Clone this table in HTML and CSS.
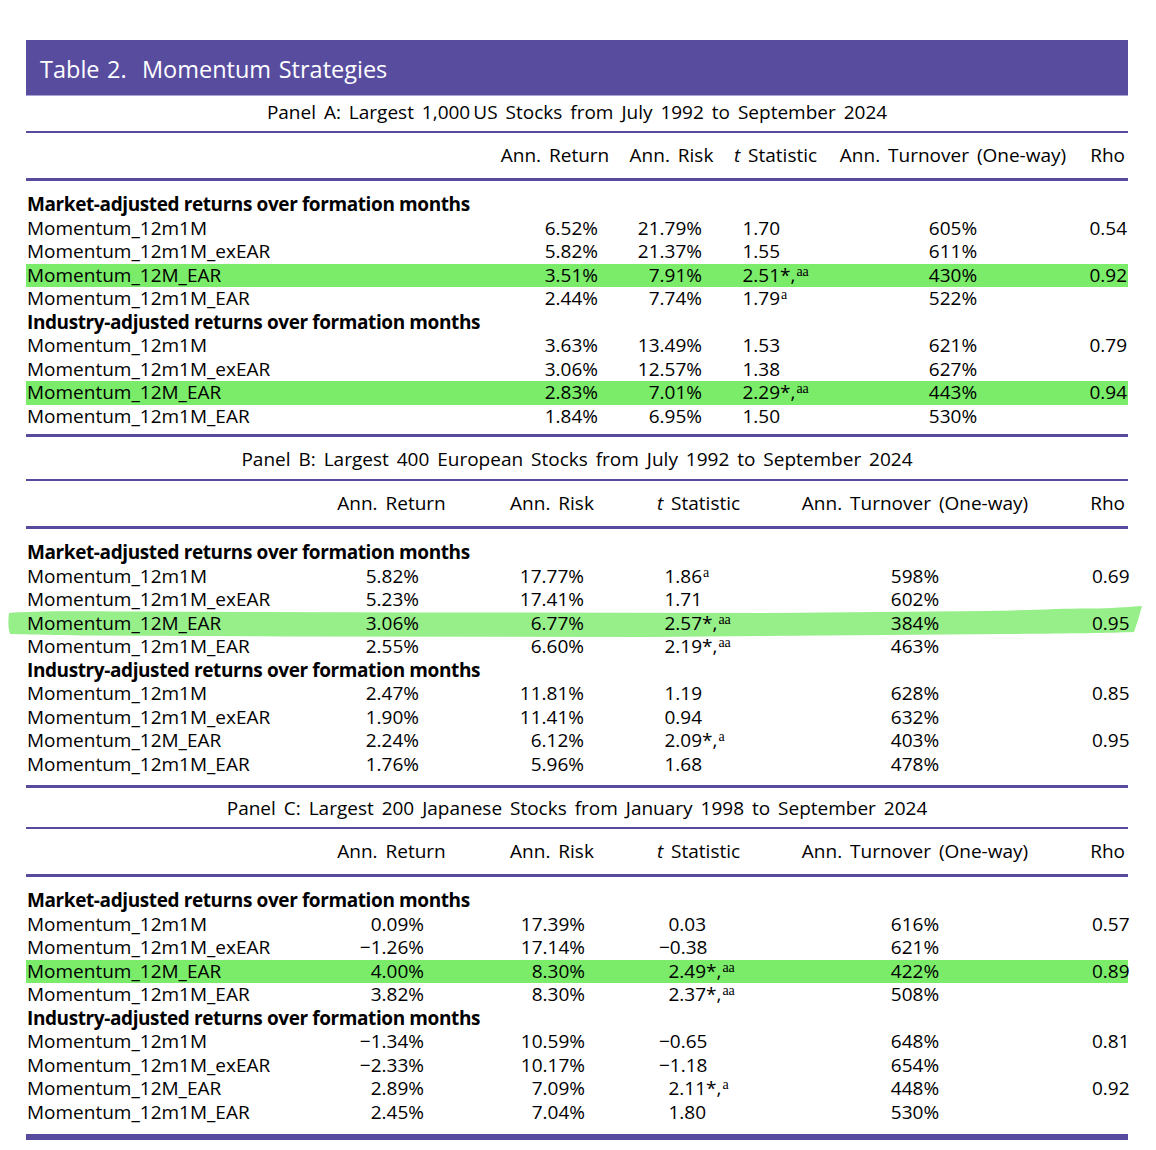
FILE: index.html
```html
<!DOCTYPE html>
<html lang="en">
<head>
<meta charset="utf-8">
<title>Table 2. Momentum Strategies</title>
<link rel="stylesheet" href="styles.css">
</head>
<body>
<div class="table">
  <div class="caption">Table 2.&nbsp; Momentum Strategies</div>

  <section class="panel panel-a">
    <div class="panel-title">Panel A: Largest 1,000&#8201;US Stocks from July 1992 to September 2024</div>
    <div class="row head">
      <span class="c-label"></span>
      <span class="c-ret">Ann. Return</span>
      <span class="c-risk">Ann. Risk</span>
      <span class="c-t"><i>t</i>&nbsp;Statistic</span>
      <span class="c-turn">Ann. Turnover (One-way)</span>
      <span class="c-rho">Rho</span>
    </div>
    <div class="body">
      <div class="row group">Market-adjusted returns over formation months</div>
      <div class="row"><span class="c-label">Momentum_12m1M</span><span class="c-ret">6.52%</span><span class="c-risk">21.79%</span><span class="c-t"><span class="num">1.70</span></span><span class="c-turn">605%</span><span class="c-rho">0.54</span></div>
      <div class="row"><span class="c-label">Momentum_12m1M_exEAR</span><span class="c-ret">5.82%</span><span class="c-risk">21.37%</span><span class="c-t"><span class="num">1.55</span></span><span class="c-turn">611%</span><span class="c-rho"></span></div>
      <div class="row hl"><span class="c-label">Momentum_12M_EAR</span><span class="c-ret">3.51%</span><span class="c-risk">7.91%</span><span class="c-t"><span class="num">2.51</span><span class="sig">*,<sup>aa</sup></span></span><span class="c-turn">430%</span><span class="c-rho">0.92</span></div>
      <div class="row"><span class="c-label">Momentum_12m1M_EAR</span><span class="c-ret">2.44%</span><span class="c-risk">7.74%</span><span class="c-t"><span class="num">1.79</span><sup>a</sup></span><span class="c-turn">522%</span><span class="c-rho"></span></div>
      <div class="row group">Industry-adjusted returns over formation months</div>
      <div class="row"><span class="c-label">Momentum_12m1M</span><span class="c-ret">3.63%</span><span class="c-risk">13.49%</span><span class="c-t"><span class="num">1.53</span></span><span class="c-turn">621%</span><span class="c-rho">0.79</span></div>
      <div class="row"><span class="c-label">Momentum_12m1M_exEAR</span><span class="c-ret">3.06%</span><span class="c-risk">12.57%</span><span class="c-t"><span class="num">1.38</span></span><span class="c-turn">627%</span><span class="c-rho"></span></div>
      <div class="row hl"><span class="c-label">Momentum_12M_EAR</span><span class="c-ret">2.83%</span><span class="c-risk">7.01%</span><span class="c-t"><span class="num">2.29</span><span class="sig">*,<sup>aa</sup></span></span><span class="c-turn">443%</span><span class="c-rho">0.94</span></div>
      <div class="row"><span class="c-label">Momentum_12m1M_EAR</span><span class="c-ret">1.84%</span><span class="c-risk">6.95%</span><span class="c-t"><span class="num">1.50</span></span><span class="c-turn">530%</span><span class="c-rho"></span></div>
    </div>
  </section>

  <section class="panel panel-b">
    <div class="panel-title">Panel B: Largest 400 European Stocks from July 1992 to September 2024</div>
    <div class="row head">
      <span class="c-label"></span>
      <span class="c-ret">Ann. Return</span>
      <span class="c-risk">Ann. Risk</span>
      <span class="c-t"><i>t</i>&nbsp;Statistic</span>
      <span class="c-turn">Ann. Turnover (One-way)</span>
      <span class="c-rho">Rho</span>
    </div>
    <div class="body">
      <div class="row group">Market-adjusted returns over formation months</div>
      <div class="row"><span class="c-label">Momentum_12m1M</span><span class="c-ret">5.82%</span><span class="c-risk">17.77%</span><span class="c-t"><span class="num">1.86</span><sup>a</sup></span><span class="c-turn">598%</span><span class="c-rho">0.69</span></div>
      <div class="row"><span class="c-label">Momentum_12m1M_exEAR</span><span class="c-ret">5.23%</span><span class="c-risk">17.41%</span><span class="c-t"><span class="num">1.71</span></span><span class="c-turn">602%</span><span class="c-rho"></span></div>
      <div class="row brushed">
        <svg class="brush" viewBox="0 0 1136 40" preserveAspectRatio="none" aria-hidden="true"><path d="M1 13 C 20 11, 60 11, 120 11.5 L 420 12.5 L 760 13 L 980 11 C 1030 10, 1060 8, 1090 8.5 C 1110 8, 1125 6.5, 1134 6 L 1130 20 L 1126 32 C 1100 33, 1060 33.5, 1000 34 L 640 37 L 280 36.5 L 80 35.5 C 40 35, 15 34.5, 2 34 C 0 28, 0 20, 1 13 Z" fill="#97ef89"/></svg>
        <span class="c-label">Momentum_12M_EAR</span><span class="c-ret">3.06%</span><span class="c-risk">6.77%</span><span class="c-t"><span class="num">2.57</span><span class="sig">*,<sup>aa</sup></span></span><span class="c-turn">384%</span><span class="c-rho">0.95</span></div>
      <div class="row"><span class="c-label">Momentum_12m1M_EAR</span><span class="c-ret">2.55%</span><span class="c-risk">6.60%</span><span class="c-t"><span class="num">2.19</span><span class="sig">*,<sup>aa</sup></span></span><span class="c-turn">463%</span><span class="c-rho"></span></div>
      <div class="row group">Industry-adjusted returns over formation months</div>
      <div class="row"><span class="c-label">Momentum_12m1M</span><span class="c-ret">2.47%</span><span class="c-risk">11.81%</span><span class="c-t"><span class="num">1.19</span></span><span class="c-turn">628%</span><span class="c-rho">0.85</span></div>
      <div class="row"><span class="c-label">Momentum_12m1M_exEAR</span><span class="c-ret">1.90%</span><span class="c-risk">11.41%</span><span class="c-t"><span class="num">0.94</span></span><span class="c-turn">632%</span><span class="c-rho"></span></div>
      <div class="row"><span class="c-label">Momentum_12M_EAR</span><span class="c-ret">2.24%</span><span class="c-risk">6.12%</span><span class="c-t"><span class="num">2.09</span><span class="sig">*,<sup>a</sup></span></span><span class="c-turn">403%</span><span class="c-rho">0.95</span></div>
      <div class="row"><span class="c-label">Momentum_12m1M_EAR</span><span class="c-ret">1.76%</span><span class="c-risk">5.96%</span><span class="c-t"><span class="num">1.68</span></span><span class="c-turn">478%</span><span class="c-rho"></span></div>
    </div>
  </section>

  <section class="panel panel-c">
    <div class="panel-title">Panel C: Largest 200 Japanese Stocks from January 1998 to September 2024</div>
    <div class="row head">
      <span class="c-label"></span>
      <span class="c-ret">Ann. Return</span>
      <span class="c-risk">Ann. Risk</span>
      <span class="c-t"><i>t</i>&nbsp;Statistic</span>
      <span class="c-turn">Ann. Turnover (One-way)</span>
      <span class="c-rho">Rho</span>
    </div>
    <div class="body">
      <div class="row group">Market-adjusted returns over formation months</div>
      <div class="row"><span class="c-label">Momentum_12m1M</span><span class="c-ret">0.09%</span><span class="c-risk">17.39%</span><span class="c-t"><span class="num">0.03</span></span><span class="c-turn">616%</span><span class="c-rho">0.57</span></div>
      <div class="row"><span class="c-label">Momentum_12m1M_exEAR</span><span class="c-ret">&minus;1.26%</span><span class="c-risk">17.14%</span><span class="c-t"><span class="num">&minus;0.38</span></span><span class="c-turn">621%</span><span class="c-rho"></span></div>
      <div class="row hl"><span class="c-label">Momentum_12M_EAR</span><span class="c-ret">4.00%</span><span class="c-risk">8.30%</span><span class="c-t"><span class="num">2.49</span><span class="sig">*,<sup>aa</sup></span></span><span class="c-turn">422%</span><span class="c-rho">0.89</span></div>
      <div class="row"><span class="c-label">Momentum_12m1M_EAR</span><span class="c-ret">3.82%</span><span class="c-risk">8.30%</span><span class="c-t"><span class="num">2.37</span><span class="sig">*,<sup>aa</sup></span></span><span class="c-turn">508%</span><span class="c-rho"></span></div>
      <div class="row group">Industry-adjusted returns over formation months</div>
      <div class="row"><span class="c-label">Momentum_12m1M</span><span class="c-ret">&minus;1.34%</span><span class="c-risk">10.59%</span><span class="c-t"><span class="num">&minus;0.65</span></span><span class="c-turn">648%</span><span class="c-rho">0.81</span></div>
      <div class="row"><span class="c-label">Momentum_12m1M_exEAR</span><span class="c-ret">&minus;2.33%</span><span class="c-risk">10.17%</span><span class="c-t"><span class="num">&minus;1.18</span></span><span class="c-turn">654%</span><span class="c-rho"></span></div>
      <div class="row"><span class="c-label">Momentum_12M_EAR</span><span class="c-ret">2.89%</span><span class="c-risk">7.09%</span><span class="c-t"><span class="num">2.11</span><span class="sig">*,<sup>a</sup></span></span><span class="c-turn">448%</span><span class="c-rho">0.92</span></div>
      <div class="row"><span class="c-label">Momentum_12m1M_EAR</span><span class="c-ret">2.45%</span><span class="c-risk">7.04%</span><span class="c-t"><span class="num">1.80</span></span><span class="c-turn">530%</span><span class="c-rho"></span></div>
    </div>
  </section>
</div>
</body>
</html>
```

FILE: styles.css
```css
* { box-sizing: border-box; }

html, body {
  margin: 0;
  padding: 0;
  background: #ffffff;
}

body {
  font-family: "Open Sans", "Noto Sans", "Liberation Sans", sans-serif;
  font-size: 19px;
  word-spacing: 3px;
  color: #000000;
}

.table {
  width: 1102px;
  margin: 40px 0 0 26px;
}

.caption {
  height: 56px;
  padding: 4px 0 0 14px;
  line-height: 51px;
  font-size: 23.5px;
  word-spacing: 1.5px;
  color: #ffffff;
  background: #584c9f;
  border-bottom: 1px solid #aca4d6;
  white-space: nowrap;
}

.panel {
  border-bottom: 3px solid #574b9e;
}

.panel-title {
  line-height: 23px;
  text-align: center;
  border-bottom: 2px solid #574b9e;
  white-space: nowrap;
}

.panel-a .panel-title { height: 37px; padding-top: 5px; }
.panel-b .panel-title { height: 44px; padding-top: 10.5px; }
.panel-c .panel-title { height: 41px; padding-top: 8.5px; }

.row {
  display: grid;
  height: 23.5px;
  line-height: 23.5px;
  white-space: nowrap;
  position: relative;
  z-index: 0;
}

.panel-a .row { grid-template-columns: 474px 110px 123px 85px 270px 40px; }
.panel-b .row,
.panel-c .row { grid-template-columns: 312px 107px 214px 79px 354px 36px; }

.row.head {
  height: 48px;
  align-items: center;
  border-bottom: 3px solid #574b9e;
}

.head > span {
  display: flex;
  justify-content: center;
}

.head > .c-rho {
  justify-content: flex-end;
  padding-right: 3px;
}

.body {
  padding-top: 12px;
}

.panel-a .body { padding-bottom: 6px; }
.panel-b .body { padding-bottom: 9px; }
.panel-c .body { padding-bottom: 10px; }

.panel-c { border-bottom-width: 6px; }

.row.group {
  display: block;
  font-weight: 700;
  letter-spacing: -0.4px;
  word-spacing: 0;
  padding-left: 1px;
}

.c-label { padding-left: 1px; }

.c-ret, .c-risk, .c-rho { text-align: right; }
.c-turn { text-align: center; }
.c-rho { padding-right: 1px; }

.panel-a .c-ret { padding-right: 12px; }
.panel-a .c-risk { padding-right: 31px; }
.panel-a .num { width: 47px; }

.panel-b .c-ret { padding-right: 26px; }
.panel-b .c-risk { padding-right: 75px; }
.panel-b .num { width: 43px; }

.panel-c .c-ret { padding-right: 21px; }
.panel-c .c-risk { padding-right: 74px; }
.panel-c .num { width: 47px; }

.head .c-ret, .head .c-risk { padding-right: 0; }

.num {
  display: inline-block;
  text-align: right;
}

.sig {
  font-weight: 400;
}

.c-t sup {
  font-family: "Liberation Serif", "DejaVu Serif", serif;
  font-size: 14px;
  line-height: 0;
  vertical-align: 6px;
  margin-left: 1px;
}

.hl {
  background: #7aec69;
}

.brush {
  position: absolute;
  left: -18px;
  top: -12px;
  width: 1136px;
  height: 40px;
  z-index: -1;
}
```
